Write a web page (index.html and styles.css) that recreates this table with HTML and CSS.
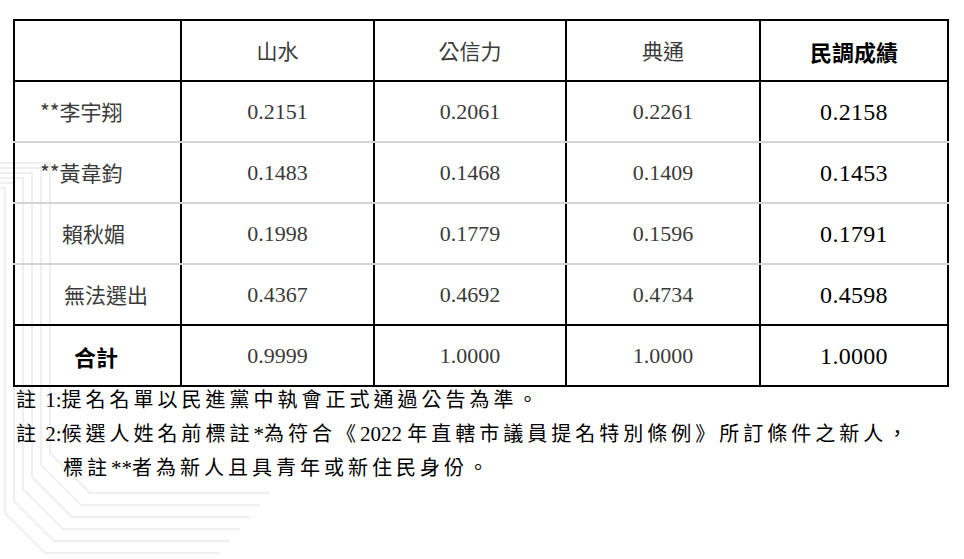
FILE: index.html
```html
<!DOCTYPE html>
<html lang="zh-Hant">
<head>
<meta charset="utf-8">
<title>民調成績</title>
<link rel="stylesheet" href="styles.css">
</head>
<body>
<div class="page">
  <svg class="deco" width="320" height="559" viewBox="0 0 320 559" aria-hidden="true">
    <g fill="none" stroke="#efefef" stroke-width="2">
      <path d="M0,163 H50 V453 L90,493 H270"/>
      <path d="M0,168 H41 V465 L81,505 H260"/>
      <path d="M0,173 H32 V477 L72,517 H250"/>
      <path d="M0,178 H23 V489 L63,529 H240"/>
      <path d="M0,183 H14 V501 L54,541 H230"/>
      <path d="M0,188 H5 V513 L45,553 H220"/>
    </g>
  </svg>
  <table class="poll">
    <colgroup>
      <col class="c-name">
      <col class="c-a">
      <col class="c-b">
      <col class="c-c">
      <col class="c-d">
    </colgroup>
    <thead>
      <tr>
        <th></th>
        <th class="head">山水</th>
        <th class="head">公信力</th>
        <th class="head">典通</th>
        <th class="head head-strong">民調成績</th>
      </tr>
    </thead>
    <tbody>
      <tr>
        <td class="name name-a">**李宇翔</td>
        <td class="num">0.2151</td>
        <td class="num">0.2061</td>
        <td class="num">0.2261</td>
        <td class="num num-strong">0.2158</td>
      </tr>
      <tr>
        <td class="name name-a">**黃韋鈞</td>
        <td class="num">0.1483</td>
        <td class="num">0.1468</td>
        <td class="num">0.1409</td>
        <td class="num num-strong">0.1453</td>
      </tr>
      <tr>
        <td class="name name-b">賴秋媚</td>
        <td class="num">0.1998</td>
        <td class="num">0.1779</td>
        <td class="num">0.1596</td>
        <td class="num num-strong">0.1791</td>
      </tr>
      <tr class="last">
        <td class="name name-c">無法選出</td>
        <td class="num">0.4367</td>
        <td class="num">0.4692</td>
        <td class="num">0.4734</td>
        <td class="num num-strong">0.4598</td>
      </tr>
      <tr class="total">
        <td class="name name-total">合計</td>
        <td class="num">0.9999</td>
        <td class="num">1.0000</td>
        <td class="num">1.0000</td>
        <td class="num num-strong">1.0000</td>
      </tr>
    </tbody>
  </table>
  <div class="notes">
    <p class="note">註<span class="lat"> 1:</span>提名名單以民進黨中執會正式通過公告為準。</p>
    <p class="note">註<span class="lat"> 2:</span>候選人姓名前標註<span class="lat">*</span>為符合《<span class="lat">2022 </span>年直轄市議員提名特別條例》所訂條件之新人，</p>
    <p class="note note-indent">標註<span class="lat">**</span>者為新人且具青年或新住民身份。</p>
  </div>
</div>
</body>
</html>
```
FILE: styles.css
```css
html, body {
  margin: 0;
  padding: 0;
  background: #ffffff;
}

.page {
  position: relative;
  width: 964px;
  height: 559px;
  overflow: hidden;
  box-sizing: border-box;
  padding: 19px 0 0 13px;
  background: #ffffff;
}

.deco {
  position: absolute;
  left: 0;
  top: 0;
  z-index: 0;
  pointer-events: none;
}

.poll {
  position: relative;
  z-index: 1;
  width: 934px;
  table-layout: fixed;
  border-collapse: collapse;
  border: 2px solid #000;
}

.c-name { width: 167px; }
.c-a { width: 193px; }
.c-b { width: 192px; }
.c-c { width: 194px; }
.c-d { width: 188px; }

.poll th,
.poll td {
  height: 61px;
  padding: 0;
  box-sizing: border-box;
  border-left: 2px solid #000;
  border-right: 2px solid #000;
  border-bottom: 2px solid #d4d4d4;
  text-align: center;
  vertical-align: middle;
  line-height: 1;
}

.poll thead th {
  border-bottom: 2px solid #000;
}

.poll tr.last td {
  border-bottom: 2px solid #000;
}

.poll tr.total td {
  border-bottom: 2px solid #000;
}

.head {
  font-family: "Noto Sans CJK TC", "Noto Sans", sans-serif;
  font-size: 21px;
  font-weight: 400;
  color: #3a3a3a;
  padding-top: 2px;
}

.poll th.head-strong {
  font-size: 22px;
  font-weight: 700;
  color: #000;
}

.poll td.name {
  font-family: "Noto Sans CJK TC", "Noto Sans", sans-serif;
  font-size: 21px;
  color: #3a3a3a;
  text-align: left;
}

.poll td.name-a { padding-left: 25px; }
.poll td.name-b { padding-left: 47px; }
.poll td.name-c { padding-left: 49px; }
.poll td.name-total {
  padding-left: 59px;
  font-weight: 700;
  font-size: 22px;
  color: #000;
}

.num {
  font-family: "Liberation Serif", "Times New Roman", serif;
  font-size: 22px;
  color: #3a3a3a;
  padding-top: 2px;
}

.poll td.num-strong {
  font-size: 24px;
  color: #000;
  letter-spacing: 0.3px;
}

.notes {
  position: relative;
  z-index: 1;
  margin-top: -4px;
  padding-left: 3px;
}

.note {
  margin: 0;
  font-family: "Liberation Serif", "Noto Sans CJK TC", serif;
  font-size: 20px;
  line-height: 34px;
  letter-spacing: 4px;
  color: #000;
  white-space: nowrap;
}

.note .lat {
  letter-spacing: 0;
  font-size: 21px;
}

.note-indent {
  padding-left: 47px;
}
```
